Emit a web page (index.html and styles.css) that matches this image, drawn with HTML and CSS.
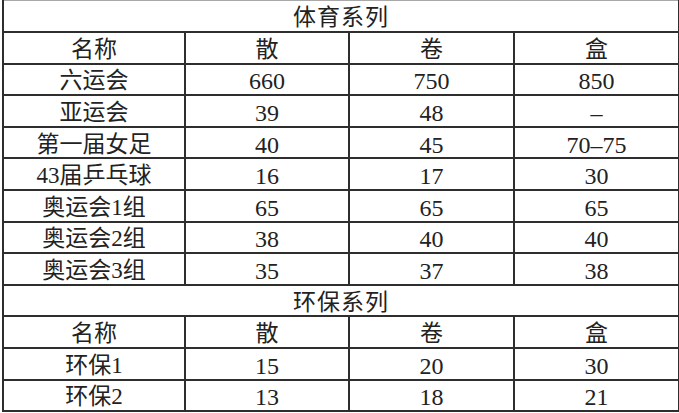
FILE: index.html
```html
<!DOCTYPE html>
<html lang="zh">
<head>
<meta charset="utf-8">
<link rel="stylesheet" href="styles.css">
</head>
<body>
<div class="sheet">
<table class="price">
<colgroup><col class="c1"><col class="c2"><col class="c3"><col class="c4"></colgroup>
<tr class="title first"><td colspan="4">体育系列</td></tr>
<tr><td>名称</td><td>散</td><td>卷</td><td>盒</td></tr>
<tr><td>六运会</td><td class="n">660</td><td class="n">750</td><td class="n">850</td></tr>
<tr><td>亚运会</td><td class="n">39</td><td class="n">48</td><td class="n">–</td></tr>
<tr><td>第一届女足</td><td class="n">40</td><td class="n">45</td><td class="n">70–75</td></tr>
<tr><td>43届乒乓球</td><td class="n">16</td><td class="n">17</td><td class="n">30</td></tr>
<tr><td>奥运会1组</td><td class="n">65</td><td class="n">65</td><td class="n">65</td></tr>
<tr><td>奥运会2组</td><td class="n">38</td><td class="n">40</td><td class="n">40</td></tr>
<tr><td>奥运会3组</td><td class="n">35</td><td class="n">37</td><td class="n">38</td></tr>
<tr class="title"><td colspan="4">环保系列</td></tr>
<tr><td>名称</td><td>散</td><td>卷</td><td>盒</td></tr>
<tr><td>环保1</td><td class="n">15</td><td class="n">20</td><td class="n">30</td></tr>
<tr><td>环保2</td><td class="n">13</td><td class="n">18</td><td class="n">21</td></tr>
</table>
</div>
</body>
</html>
```
FILE: styles.css
```css
html, body {
  margin: 0;
  padding: 0;
  background: #ffffff;
}
.sheet {
  width: 679px;
  height: 413px;
  overflow: hidden;
  box-sizing: border-box;
  padding-left: 2px;
}
.price {
  border-collapse: collapse;
  table-layout: fixed;
  width: 676px;
  font-family: "Liberation Serif", "Noto Sans CJK SC", serif;
  font-size: 23px;
  color: #222222;
}
.c1 { width: 182px; }
.c2 { width: 164px; }
.c3 { width: 165px; }
.c4 { width: 165px; }
.price tr {
  height: 31.6px;
}
.price td {
  border: 2px solid #2e2e2e;
  padding: 4px 0 0 0;
  text-align: center;
  vertical-align: middle;
  line-height: 24px;
  white-space: nowrap;
}
.price td.n {
  font-size: 24px;
}
.price tr.first td {
  border-top: 1px solid #a8a8a8;
}
.price tr.title td {
  letter-spacing: 1px;
}
```
